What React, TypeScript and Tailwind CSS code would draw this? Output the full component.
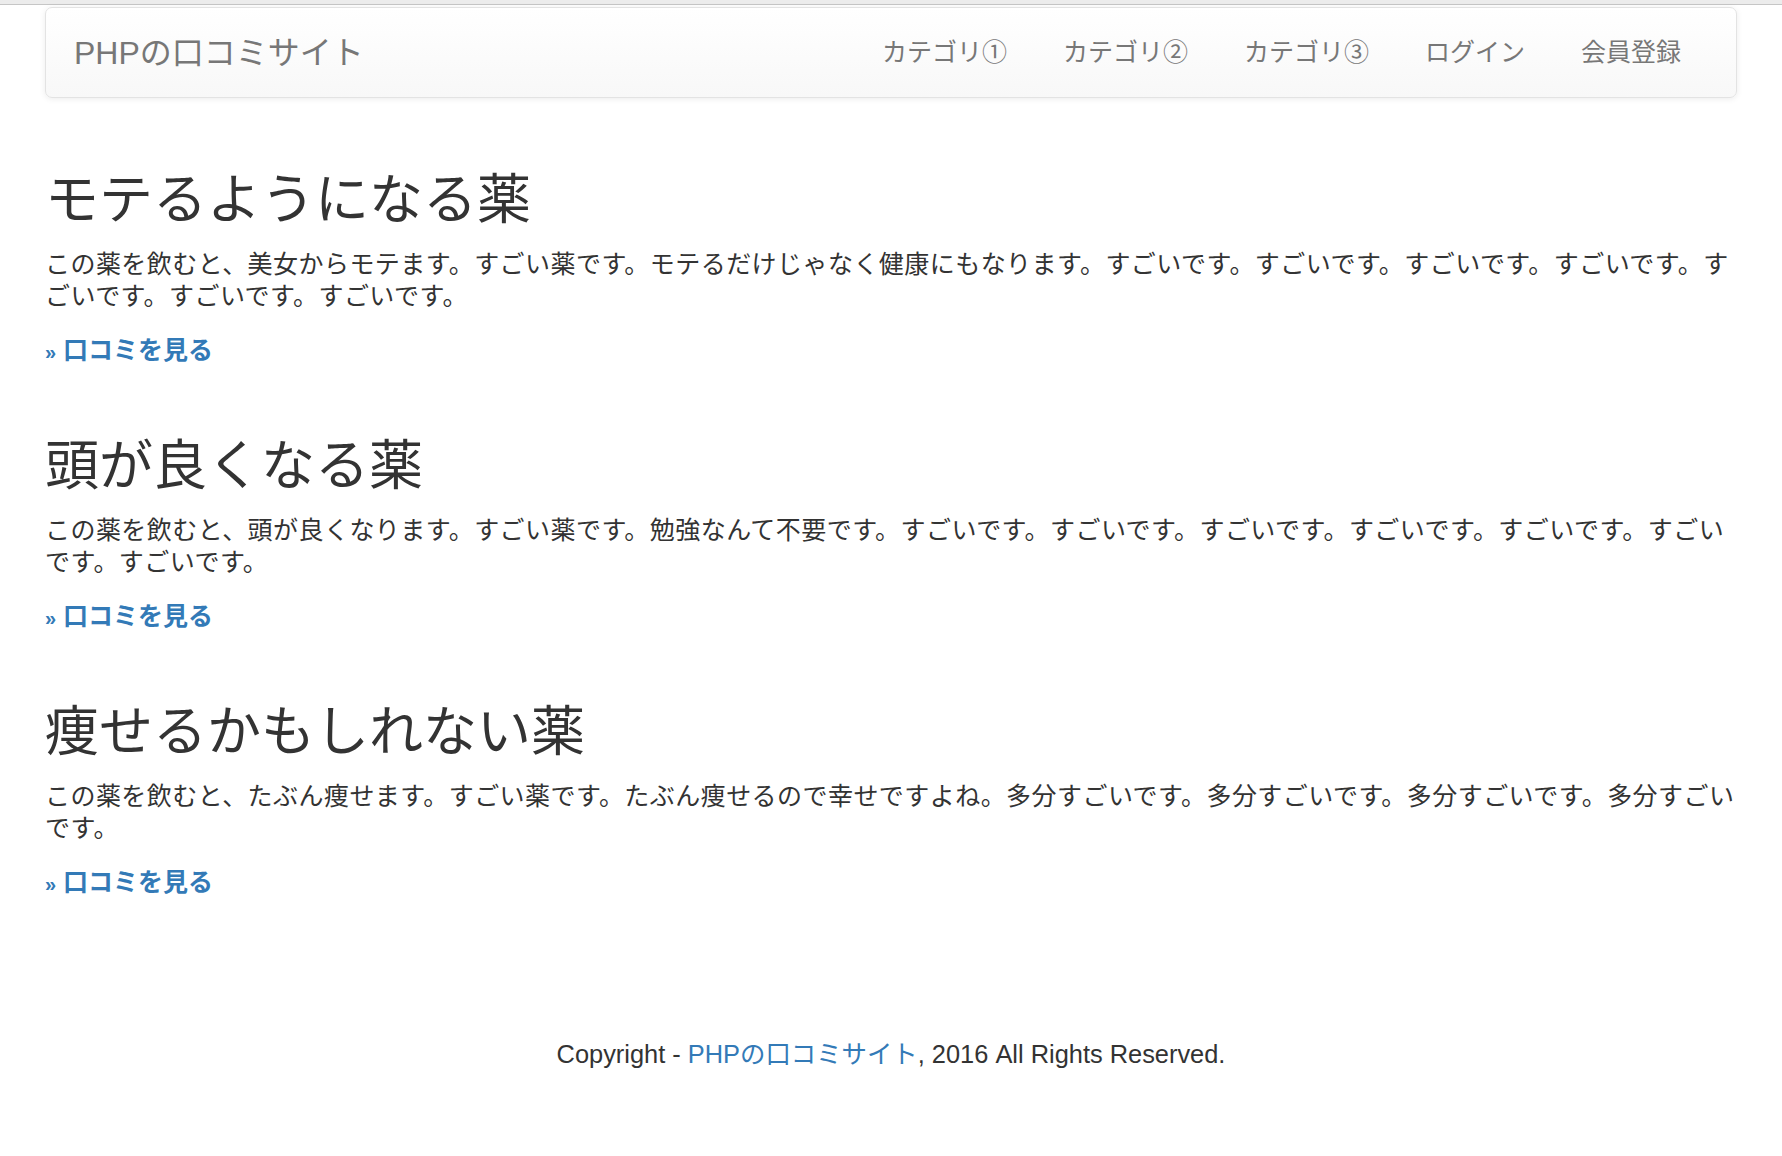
import React from "react";

const FONT = { fontFamily: '"Liberation Sans", "Noto Sans CJK JP", sans-serif' };

const items = [
  {
    title: "モテるようになる薬",
    body: "この薬を飲むと、美女からモテます。すごい薬です。モテるだけじゃなく健康にもなります。すごいです。すごいです。すごいです。すごいです。すごいです。すごいです。すごいです。",
  },
  {
    title: "頭が良くなる薬",
    body: "この薬を飲むと、頭が良くなります。すごい薬です。勉強なんて不要です。すごいです。すごいです。すごいです。すごいです。すごいです。すごいです。すごいです。",
  },
  {
    title: "痩せるかもしれない薬",
    body: "この薬を飲むと、たぶん痩せます。すごい薬です。たぶん痩せるので幸せですよね。多分すごいです。多分すごいです。多分すごいです。多分すごいです。",
  },
];

const nav = ["カテゴリ①", "カテゴリ②", "カテゴリ③", "ログイン", "会員登録"];

export default function App() {
  return (
    <div className="min-h-[1156px] w-full bg-white text-[#333] [text-spacing-trim:space-all]" style={FONT}>
      <div className="h-[5px] bg-[#ececec] border-b border-[#c6c6c6]" />
      <div className="px-[45px] pt-[2px]">
        <nav className="flex h-[91px] items-center justify-between rounded-[7px] border border-[#e3e3e3] bg-gradient-to-b from-white to-[#f8f8f8] pl-[28px] pr-[27px] shadow-[0_1px_6px_rgba(0,0,0,0.08)]">
          <span className="text-[32px] leading-none text-[#777]">PHPの口コミサイト</span>
          <div className="flex">
            {nav.map((n) => (
              <span key={n} className="px-[28px] text-[25px] leading-none text-[#777]">
                {n}
              </span>
            ))}
          </div>
        </nav>

        <main className="flex flex-col pt-[72px]">
          {items.map((it, i) => (
            <section key={i} className={`flex flex-col ${i === 0 ? "" : "pt-[68px]"}`}>
              <h2 className="mb-[18px] text-[54px] font-normal leading-[60px] text-[#333]">
                {it.title}
              </h2>
              <p className="mb-[22px] text-[25px] leading-[32px] tracking-[0.45px]">{it.body}</p>
              <p className="text-[25px] leading-[32px]">
                <a className="font-bold text-[#337ab7]" href="#">
                  <span className="text-[20px]">»</span> 口コミを見る
                </a>
              </p>
            </section>
          ))}
        </main>

        <footer className="pt-[138px] text-center text-[25.4px] leading-[32px] text-[#333]">
          Copyright - <a className="text-[#337ab7]" href="#">PHPの口コミサイト</a>, 2016 All Rights Reserved.
        </footer>
      </div>
    </div>
  );
}
